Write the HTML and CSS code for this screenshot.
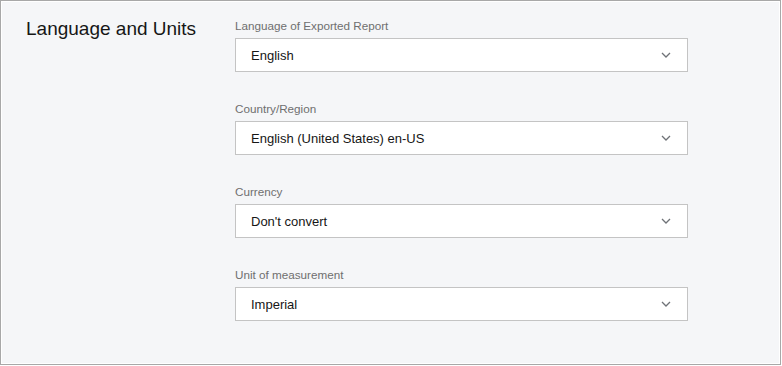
FILE: index.html
```html
<!DOCTYPE html>
<html lang="en">
<head>
    <meta charset="UTF-8">
    <meta name="viewport" content="width=device-width, initial-scale=1.0">
    <title>Language and Units</title>
    <link rel="stylesheet" href="styles.css">
</head>
<body>
    <div class="panel">
        <h2 class="section-title">Language and Units</h2>
        <div class="fields">
            <div class="field">
                <label class="field-label">Language of Exported Report</label>
                <div class="select">
                    <span>English</span>
                    <svg class="chevron" width="10" height="6" viewBox="0 0 10 6"><path d="M1 1l4 4 4-4" fill="none" stroke="#6f7277" stroke-width="1.3"/></svg>
                </div>
            </div>
            <div class="field">
                <label class="field-label">Country/Region</label>
                <div class="select">
                    <span>English (United States) en-US</span>
                    <svg class="chevron" width="10" height="6" viewBox="0 0 10 6"><path d="M1 1l4 4 4-4" fill="none" stroke="#6f7277" stroke-width="1.3"/></svg>
                </div>
            </div>
            <div class="field">
                <label class="field-label">Currency</label>
                <div class="select">
                    <span>Don't convert</span>
                    <svg class="chevron" width="10" height="6" viewBox="0 0 10 6"><path d="M1 1l4 4 4-4" fill="none" stroke="#6f7277" stroke-width="1.3"/></svg>
                </div>
            </div>
            <div class="field">
                <label class="field-label">Unit of measurement</label>
                <div class="select">
                    <span>Imperial</span>
                    <svg class="chevron" width="10" height="6" viewBox="0 0 10 6"><path d="M1 1l4 4 4-4" fill="none" stroke="#6f7277" stroke-width="1.3"/></svg>
                </div>
            </div>
        </div>
    </div>
</body>
</html>
```

FILE: styles.css
```css
body {
    margin: 0;
    padding: 0;
    background: #fff;
    font-family: "Liberation Sans", Arial, sans-serif;
    color: #161616;
}
.panel {
    box-sizing: border-box;
    width: 781px;
    height: 365px;
    border: 1px solid #a8a8a8;
    box-shadow: inset 0 0 0 1px #fff;
    background: #f5f6f8;
    display: flex;
    padding: 17px 0 0 0;
}
.section-title {
    width: 234px;
    box-sizing: border-box;
    padding-left: 25px;
    margin: -1px 0 0 0;
    font-size: 19px;
    font-weight: normal;
    line-height: 24px;
}
.fields {
    display: flex;
    flex-direction: column;
    gap: 29px;
    width: 453px;
}
.field-label {
    display: block;
    font-size: 11.7px;
    line-height: 16px;
    color: #6f6f6f;
    margin-bottom: 4px;
}
.select {
    box-sizing: border-box;
    height: 34px;
    background: #fff;
    border: 1px solid #c4c4c4;
    display: flex;
    align-items: center;
    justify-content: space-between;
    padding: 0 16px 0 15px;
    font-size: 13px;
}
.chevron {
    display: block;
}
```
